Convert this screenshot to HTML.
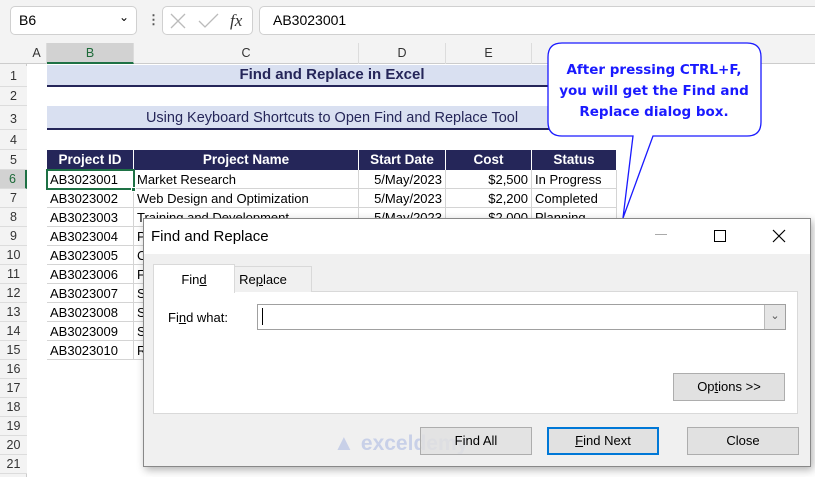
<!DOCTYPE html>
<html><head><meta charset="utf-8"><style>
*{box-sizing:border-box;margin:0;padding:0}
body{width:815px;height:477px;overflow:hidden;background:#fff;font-family:"Liberation Sans",sans-serif;position:relative;font-size:13px;color:#000}
.a{position:absolute}
.rh{position:absolute;left:0;width:27px;text-align:center;color:#333;font-size:12.5px;background:#f3f3f3;border-bottom:1px solid #dcdcdc}
.ch{position:absolute;top:43px;height:21px;text-align:center;color:#333;font-size:12.5px;line-height:21px;border-right:1px solid #dcdcdc}
.c{position:absolute;height:19px;line-height:19px;font-size:13px;padding-left:3px;border-right:1px solid #d4d4d4;border-bottom:1px solid #d4d4d4;white-space:nowrap;overflow:hidden}
.h{position:absolute;top:150px;height:20px;line-height:20px;background:#252659;color:#fff;font-weight:bold;text-align:center;font-size:13.5px;border-right:1px solid #fff}
.btn{position:absolute;top:427px;height:28px;background:#e1e1e1;border:1px solid #adadad;text-align:center;line-height:26px;font-size:13px}
</style></head><body>
<!-- top bar -->
<div class="a" style="left:0;top:0;width:815px;height:43px;background:#f3f3f3"></div>
<div class="a" style="left:10px;top:6px;width:127px;height:29px;background:#fff;border:1px solid #d0d0d0;border-radius:5px;padding:5px 0 0 8px;font-size:14px">B6<span class="a" style="left:108px;top:3px;font-size:12px">&#8964;</span></div>
<div class="a" style="left:147px;top:12px;color:#555;font-weight:bold;font-size:13px">&#8942;</div>
<div class="a" style="left:162px;top:6px;width:91px;height:29px;background:#fff;border:1px solid #d0d0d0;border-radius:5px"></div>
<svg class="a" style="left:168px;top:12px" width="80" height="18"><path d="M3 2 L17 16 M17 2 L3 16" stroke="#bbb" stroke-width="1.3"/><path d="M31 9 L37 15 L50 2" stroke="#bbb" stroke-width="1.3" fill="none"/><text x="62" y="14" font-family="Liberation Serif" font-style="italic" font-size="17" fill="#333">fx</text></svg>
<div class="a" style="left:259px;top:6px;width:570px;height:29px;background:#fff;border:1px solid #d0d0d0;border-radius:5px;padding:5px 0 0 13px;font-size:14px">AB3023001</div>
<!-- column headers -->
<div class="a" style="left:0;top:43px;width:815px;height:21px;background:#f3f3f3;border-bottom:1px solid #ccc"></div>
<div class="ch" style="left:27px;width:20px">A</div>
<div class="ch" style="left:47px;width:87px;background:#d2d2d2;color:#1e6b3a;border-bottom:2px solid #1e7145">B</div>
<div class="ch" style="left:134px;width:225px">C</div>
<div class="ch" style="left:359px;width:87px">D</div>
<div class="ch" style="left:446px;width:86px">E</div>
<div class="ch" style="left:532px;width:85px">F</div>
<div class="a" style="left:0;top:64px;width:27px;height:413px;background:#f3f3f3;border-right:1px solid #ccc"></div>
<div class="rh" style="top:66px;height:21px;line-height:21px">1</div>
<div class="rh" style="top:87px;height:19px;line-height:19px">2</div>
<div class="rh" style="top:106px;height:24px;line-height:26px">3</div>
<div class="rh" style="top:130px;height:20px;line-height:20px">4</div>
<div class="rh" style="top:150px;height:20px;line-height:20px">5</div>
<div class="rh" style="top:170px;height:19px;line-height:19px;background:#d2d2d2;color:#1e6b3a;border-right:2px solid #1e7145">6</div>
<div class="rh" style="top:189px;height:19px;line-height:19px">7</div>
<div class="rh" style="top:208px;height:19px;line-height:19px">8</div>
<div class="rh" style="top:227px;height:19px;line-height:19px">9</div>
<div class="rh" style="top:246px;height:19px;line-height:19px">10</div>
<div class="rh" style="top:265px;height:19px;line-height:19px">11</div>
<div class="rh" style="top:284px;height:19px;line-height:19px">12</div>
<div class="rh" style="top:303px;height:19px;line-height:19px">13</div>
<div class="rh" style="top:322px;height:19px;line-height:19px">14</div>
<div class="rh" style="top:341px;height:19px;line-height:19px">15</div>
<div class="rh" style="top:360px;height:19px;line-height:19px">16</div>
<div class="rh" style="top:379px;height:19px;line-height:19px">17</div>
<div class="rh" style="top:398px;height:19px;line-height:19px">18</div>
<div class="rh" style="top:417px;height:19px;line-height:19px">19</div>
<div class="rh" style="top:436px;height:19px;line-height:19px">20</div>
<div class="rh" style="top:455px;height:19px;line-height:19px">21</div>
<!-- titles -->
<div class="a" style="left:47px;top:65px;width:570px;height:22px;background:#d9e0f1;border-bottom:2px solid #252659;text-align:center;font-weight:bold;font-size:15px;line-height:20px;color:#252659">Find and Replace in Excel</div>
<div class="a" style="left:47px;top:106px;width:570px;height:24px;background:#d9e0f1;border-bottom:2px solid #252659;text-align:center;font-size:14.5px;line-height:24px;color:#252659">Using Keyboard Shortcuts to Open Find and Replace Tool</div>
<!-- table -->
<div class="h" style="left:47px;width:87px">Project ID</div>
<div class="h" style="left:134px;width:225px">Project Name</div>
<div class="h" style="left:359px;width:87px">Start Date</div>
<div class="h" style="left:446px;width:86px">Cost</div>
<div class="h" style="left:532px;width:85px">Status</div>
<div id="t"></div>
<div class="c" style="left:47px;top:170px;width:87px">AB3023001</div><div class="c" style="left:134px;top:170px;width:225px">Market Research</div><div class="c" style="left:359px;top:170px;width:87px;text-align:right;padding-right:3px">5/May/2023</div><div class="c" style="left:446px;top:170px;width:86px;text-align:right;padding-right:3px">$2,500</div><div class="c" style="left:532px;top:170px;width:85px">In Progress</div>
<div class="c" style="left:47px;top:189px;width:87px">AB3023002</div><div class="c" style="left:134px;top:189px;width:225px">Web Design and Optimization</div><div class="c" style="left:359px;top:189px;width:87px;text-align:right;padding-right:3px">5/May/2023</div><div class="c" style="left:446px;top:189px;width:86px;text-align:right;padding-right:3px">$2,200</div><div class="c" style="left:532px;top:189px;width:85px">Completed</div>
<div class="c" style="left:47px;top:208px;width:87px">AB3023003</div><div class="c" style="left:134px;top:208px;width:225px">Training and Development</div><div class="c" style="left:359px;top:208px;width:87px;text-align:right;padding-right:3px">5/May/2023</div><div class="c" style="left:446px;top:208px;width:86px;text-align:right;padding-right:3px">$2,000</div><div class="c" style="left:532px;top:208px;width:85px">Planning</div>
<div class="c" style="left:47px;top:227px;width:87px">AB3023004</div><div class="c" style="left:134px;top:227px;width:20px">P</div>
<div class="c" style="left:47px;top:246px;width:87px">AB3023005</div><div class="c" style="left:134px;top:246px;width:20px">C</div>
<div class="c" style="left:47px;top:265px;width:87px">AB3023006</div><div class="c" style="left:134px;top:265px;width:20px">F</div>
<div class="c" style="left:47px;top:284px;width:87px">AB3023007</div><div class="c" style="left:134px;top:284px;width:20px">S</div>
<div class="c" style="left:47px;top:303px;width:87px">AB3023008</div><div class="c" style="left:134px;top:303px;width:20px">S</div>
<div class="c" style="left:47px;top:322px;width:87px">AB3023009</div><div class="c" style="left:134px;top:322px;width:20px">S</div>
<div class="c" style="left:47px;top:341px;width:87px">AB3023010</div><div class="c" style="left:134px;top:341px;width:20px">R</div>
<div class="a" style="left:46px;top:169px;width:89px;height:21px;border:2px solid #1e7145"></div>
<div class="a" style="left:131px;top:187px;width:5px;height:5px;background:#1e7145;border:1px solid #fff"></div>
<!-- callout -->
<svg class="a" style="left:540px;top:38px" width="230" height="185"><path d="M22 5 H207 Q221 5 221 19 V84 Q221 98 207 98 H113 L83 180 L93 98 H22 Q8 98 8 84 V19 Q8 5 22 5 Z" fill="#fff" stroke="#1a1aff" stroke-width="1.3"/><text font-family="DejaVu Sans,sans-serif" font-size="13.5" font-weight="bold" fill="#1a1aff" text-anchor="middle"><tspan x="114" y="36">After pressing CTRL+F,</tspan><tspan x="114" y="57">you will get the Find and</tspan><tspan x="114" y="78">Replace dialog box.</tspan></text></svg>
<!-- dialog -->
<div class="a" style="left:143px;top:218px;width:668px;height:249px;background:#f0f0f0;border:1px solid #888;box-shadow:2px 3px 8px rgba(0,0,0,.3)"></div>
<div class="a" style="left:144px;top:219px;width:666px;height:35px;background:#fff"></div>
<div class="a" style="left:151px;top:228px;font-size:15px">Find and Replace</div>
<div class="a" style="left:655px;top:234px;width:12px;height:1px;background:#aaa"></div>
<div class="a" style="left:714px;top:230px;width:12px;height:12px;border:1.3px solid #000"></div>
<svg class="a" style="left:772px;top:229px" width="14" height="14"><path d="M1 1L13 13M13 1L1 13" stroke="#000" stroke-width="1.2"/></svg>
<div class="a" style="left:153px;top:291px;width:645px;height:123px;background:#fff;border:1px solid #d9d9d9"></div>
<div class="a" style="left:214px;top:266px;width:98px;height:26px;background:#f0f0f0;border:1px solid #d9d9d9;border-bottom:none;text-align:center;line-height:26px">Re<u>p</u>lace</div>
<div class="a" style="left:153px;top:264px;width:82px;height:29px;background:#fff;border:1px solid #d9d9d9;border-bottom:none;text-align:center;line-height:30px">Fin<u>d</u></div>
<div class="a" style="left:168px;top:310px">Fi<u>n</u>d what:</div>
<div class="a" style="left:257px;top:304px;width:529px;height:26px;background:#fff;border:1px solid #a0a0a0"></div>
<div class="a" style="left:262px;top:308px;width:1px;height:17px;background:#000"></div>
<div class="a" style="left:764px;top:305px;width:21px;height:24px;background:#e5e5e5;border-left:1px solid #bbb;text-align:center;font-size:11px;line-height:22px;color:#555">&#8964;</div>
<div class="btn" style="left:673px;top:373px">&nbsp;</div>
<div class="btn" style="left:673px;top:373px;width:112px">Op<u>t</u>ions &gt;&gt;</div>
<div class="a" style="left:333px;top:430px;font-size:22px;font-weight:bold;color:#c8d0e8">&#9650; <span style="font-size:21px">exceldemy</span></div>
<div class="btn" style="left:420px;width:112px;background:rgba(225,225,225,.85)">Find All</div>
<div class="btn" style="left:547px;width:112px;border:2px solid #0078d7;line-height:24px"><u>F</u>ind Next</div>
<div class="btn" style="left:687px;width:112px">Close</div>
</body></html>
